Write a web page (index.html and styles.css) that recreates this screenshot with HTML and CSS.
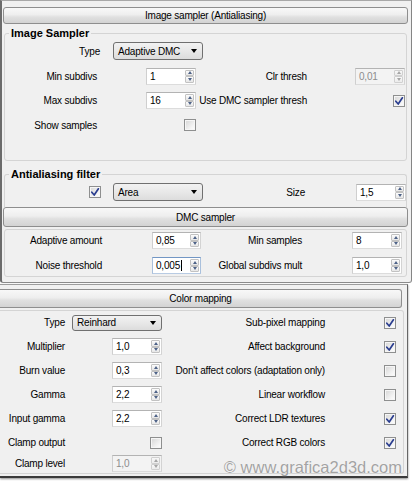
FILE: index.html
```html
<!DOCTYPE html>
<html>
<head>
<meta charset="utf-8">
<link rel="stylesheet" href="styles.css">
</head>
<body>
<div class="panel p1">
  <div class="hdr h1">Image sampler (Antialiasing)</div>

  <fieldset class="grp g1">
    <legend>Image Sampler</legend>
    <div class="rows r1">
      <div class="row row-type">
        <span class="lbl w95">Type</span>
        <div class="combo">Adaptive DMC<i class="caret"></i></div>
      </div>
      <div class="row grid c1">
        <span class="lbl">Min subdivs</span>
        <div class="spin"><span class="val">1</span><span class="arr"><b class="up"></b><b class="dn"></b></span></div>
        <span class="lbl">Clr thresh</span>
        <div class="spin dis"><span class="val">0,01</span><span class="arr"><b class="up"></b><b class="dn"></b></span></div>
      </div>
      <div class="row grid c1">
        <span class="lbl">Max subdivs</span>
        <div class="spin"><span class="val">16</span><span class="arr"><b class="up"></b><b class="dn"></b></span></div>
        <span class="lbl">Use DMC sampler thresh</span>
        <div class="chk on"><svg viewBox="0 0 10 10" width="10" height="10"><path d="M1.8 5.2 L4.2 8 L8.4 1.8" /></svg></div>
      </div>
      <div class="row grid c1">
        <span class="lbl">Show samples</span>
        <div class="chk"></div>
        <span></span>
        <span></span>
      </div>
    </div>
  </fieldset>

  <fieldset class="grp g2">
    <legend>Antialiasing filter</legend>
    <div class="row row-flt">
      <div class="chk on ml84"><svg viewBox="0 0 10 10" width="10" height="10"><path d="M1.8 5.2 L4.2 8 L8.4 1.8" /></svg></div>
      <div class="combo ml12">Area<i class="caret"></i></div>
      <span class="lbl grow">Size</span>
      <div class="spin ml51"><span class="val">1,5</span><span class="arr"><b class="up"></b><b class="dn"></b></span></div>
    </div>
  </fieldset>

  <div class="hdr h2">DMC sampler</div>

  <div class="box g3">
    <div class="rows r3">
      <div class="row grid c3">
        <span class="lbl">Adaptive amount</span>
        <div class="spin w49"><span class="val">0,85</span><span class="arr"><b class="up"></b><b class="dn"></b></span></div>
        <span class="lbl">Min samples</span>
        <div class="spin"><span class="val">8</span><span class="arr"><b class="up"></b><b class="dn"></b></span></div>
      </div>
      <div class="row grid c3">
        <span class="lbl">Noise threshold</span>
        <div class="spin w49 foc"><span class="val">0,005<i class="cur"></i></span><span class="arr"><b class="up"></b><b class="dn"></b></span></div>
        <span class="lbl">Global subdivs mult</span>
        <div class="spin"><span class="val">1,0</span><span class="arr"><b class="up"></b><b class="dn"></b></span></div>
      </div>
    </div>
  </div>
</div>

<div class="panel p2">
  <div class="hdr h3">Color mapping</div>
  <div class="box gcm">
    <div class="rows r4">
      <div class="row grid c4">
        <span class="lbl">Type</span>
        <div class="combo sm">Reinhard<i class="caret"></i></div>
        <span class="lbl">Sub-pixel mapping</span>
        <div class="chk on"><svg viewBox="0 0 10 10" width="10" height="10"><path d="M1.8 5.2 L4.2 8 L8.4 1.8" /></svg></div>
      </div>
      <div class="row grid c4">
        <span class="lbl">Multiplier</span>
        <div class="spin"><span class="val">1,0</span><span class="arr"><b class="up"></b><b class="dn"></b></span></div>
        <span class="lbl">Affect background</span>
        <div class="chk on"><svg viewBox="0 0 10 10" width="10" height="10"><path d="M1.8 5.2 L4.2 8 L8.4 1.8" /></svg></div>
      </div>
      <div class="row grid c4">
        <span class="lbl">Burn value</span>
        <div class="spin"><span class="val">0,3</span><span class="arr"><b class="up"></b><b class="dn"></b></span></div>
        <span class="lbl">Don't affect colors (adaptation only)</span>
        <div class="chk"></div>
      </div>
      <div class="row grid c4">
        <span class="lbl">Gamma</span>
        <div class="spin"><span class="val">2,2</span><span class="arr"><b class="up"></b><b class="dn"></b></span></div>
        <span class="lbl">Linear workflow</span>
        <div class="chk"></div>
      </div>
      <div class="row grid c4">
        <span class="lbl">Input gamma</span>
        <div class="spin"><span class="val">2,2</span><span class="arr"><b class="up"></b><b class="dn"></b></span></div>
        <span class="lbl">Correct LDR textures</span>
        <div class="chk on"><svg viewBox="0 0 10 10" width="10" height="10"><path d="M1.8 5.2 L4.2 8 L8.4 1.8" /></svg></div>
      </div>
      <div class="row grid c4">
        <span class="lbl">Clamp output</span>
        <div class="chk"></div>
        <span class="lbl">Correct RGB colors</span>
        <div class="chk on"><svg viewBox="0 0 10 10" width="10" height="10"><path d="M1.8 5.2 L4.2 8 L8.4 1.8" /></svg></div>
      </div>
      <div class="row grid c4 last">
        <span class="lbl">Clamp level</span>
        <div class="spin dis"><span class="val">1,0</span><span class="arr"><b class="up"></b><b class="dn"></b></span></div>
        <span></span>
        <span></span>
      </div>
    </div>
  </div>
  <div class="wm">© www.grafica2d3d.com</div>
</div>
</body>
</html>
```

FILE: styles.css
```css
* { box-sizing: border-box; }
html, body { margin: 0; padding: 0; }
body {
  width: 414px;
  height: 484px;
  overflow: hidden;
  background: #ffffff;
  font-family: "Liberation Sans", Arial, sans-serif;
  font-size: 10px;
  color: #000;
  letter-spacing: -0.2px;
}

.panel { background: #f0f0f0; }

.p1 {
  width: 412px;
  height: 283px;
  border-left: 2px solid #6b6b6b;
  border-right: 1px solid #858585;
  border-top: 1px solid #a8a8a8;
  border-bottom: 1px solid #8a8a8a;
  border-radius: 0 0 3px 3px;
  padding-top: 6px;
}

.p2 {
  position: relative;
  margin-top: 1px;
  width: 408px;
  height: 194px;
  border-top: 1px solid #9c9c9c;
  border-right: 1px solid #666;
  border-bottom: 2px solid #3a3a3a;
  box-shadow: 0 1px 2px rgba(0, 0, 0, 0.45);
  padding-top: 4px;
}

/* rollout header buttons */
.hdr {
  height: 17px;
  margin: 0 3px 0 1px;
  border: 1px solid #8e8e8e;
  border-radius: 3px;
  background: linear-gradient(#f8f8f8, #eeeeee 45%, #e0e0e0 60%, #d3d3d3);
  display: flex;
  align-items: center;
  justify-content: center;
  line-height: 13px;
}
.h2 { height: 20px; }
.h3 {
  height: 19px;
  margin: 0 5px 0 0;
  border-left: 0;
  border-radius: 0 3px 3px 0;
}

/* group boxes */
.grp {
  margin: 3px 4px 0 2px;
  padding: 2px 0 26.5px 0;
  border: 1px solid #d4d4d4;
  border-radius: 3px;
  min-width: 0;
}
.grp legend {
  padding: 0 2px;
  margin-left: 4px;
  font-weight: bold;
  font-size: 11px;
  line-height: 13px;
  letter-spacing: 0;
}
.g2 {
  margin-top: 7px;
  padding-bottom: 6px;
  border-bottom: 0;
  border-radius: 3px 3px 0 0;
}
.box {
  border: 1px solid #d4d4d4;
  border-radius: 3px;
}
.g3 {
  margin: 2px 4px 0 2px;
  padding: 2px 0;
}
.gcm {
  margin: 2px 3px 0 0;
  padding: 3px 0 1px 0;
  border-left: 0;
  border-radius: 0 3px 3px 0;
}

/* rows */
.rows { display: flex; flex-direction: column; }
.r1 { gap: 7.5px; }
.r3 { gap: 8px; }
.r4 { gap: 7px; }
.last { margin-top: -3px; }

.row {
  height: 17px;
  display: flex;
  align-items: center;
}
.row-type, .row-flt { height: 18px; }

.grid { display: grid; align-items: center; }
.c1 { grid-template-columns: 92px 99px 111px 98px; }
.c3 { grid-template-columns: 97px 99px 101px 100px; }
.c4 { grid-template-columns: 65px 97px 163px 71px; }
.grid > .spin, .grid > .chk, .grid > .combo { justify-self: end; }

.lbl {
  text-align: right;
  line-height: 13px;
  white-space: nowrap;
}
.w95 { width: 95px; flex: none; }
.row-type .combo { margin-left: 13px; }
.grow { flex: 1; }
.ml84 { margin-left: 84px; }
.ml12 { margin-left: 12px; }
.ml51 { margin-left: 51px; }

/* combo box */
.combo {
  width: 90px;
  height: 18px;
  flex: none;
  border: 1px solid #707070;
  border-radius: 3px;
  background: linear-gradient(#f2f2f2, #e8e8e8 50%, #dcdcdc);
  display: flex;
  align-items: center;
  padding: 0 5px 0 4px;
  line-height: 13px;
}
.combo.sm { height: 16px; }
.caret {
  margin-left: auto;
  width: 0;
  height: 0;
  border-left: 3.5px solid transparent;
  border-right: 3.5px solid transparent;
  border-top: 4px solid #000;
}

/* spinner */
.spin {
  width: 50px;
  height: 17px;
  flex: none;
  border: 1px solid;
  border-color: #b3b3b3 #d3d3d3 #dcdcdc #cfcfcf;
  background: #fff;
  display: flex;
  align-items: stretch;
  padding: 1px;
}
.w49 { width: 49px; }
.val {
  flex: 1;
  padding-left: 2px;
  line-height: 13px;
  display: flex;
  align-items: center;
}
.arr {
  width: 9px;
  display: flex;
  flex-direction: column;
}
.arr b {
  flex: 1;
  border: 1px solid #c2c2c2;
  border-radius: 1px;
  background: linear-gradient(#fcfcfc, #e6e6e6);
  display: flex;
  align-items: center;
  justify-content: center;
}
.arr b::after {
  content: "";
  width: 0;
  height: 0;
  border-left: 2.5px solid transparent;
  border-right: 2.5px solid transparent;
}
.arr .up::after { border-bottom: 3px solid #4e6287; }
.arr .dn::after { border-top: 3px solid #4e6287; }

.spin.dis { background: #f3f3f3; color: #8d8d8d; }
.spin.dis .arr b { background: linear-gradient(#f8f8f8, #ececec); border-color: #d0d0d0; }
.spin.dis .arr .up::after { border-bottom-color: #a6a6a6; }
.spin.dis .arr .dn::after { border-top-color: #a6a6a6; }

.spin.foc { border-color: #7296c4 #a9c0dc #b8cbe3 #a9c0dc; }
.cur {
  width: 1px;
  height: 11px;
  background: #000;
  margin-left: 1px;
}

/* checkbox */
.chk {
  width: 12px;
  height: 12px;
  flex: none;
  border: 1px solid #8e8f8f;
  background: linear-gradient(135deg, #d5d5d5, #f2f2f2 65%, #ffffff);
  box-shadow: inset 0 0 0 1px #f6f6f6;
  display: flex;
  align-items: center;
  justify-content: center;
}
.chk svg { display: block; }
.chk path {
  fill: none;
  stroke: #2a3d8f;
  stroke-width: 1.7;
  stroke-linecap: round;
  stroke-linejoin: round;
}

/* watermark overlay */
.wm {
  position: absolute;
  right: 5px;
  top: 174px;
  font-size: 16.5px;
  line-height: 16.5px;
  color: #a3a3a3;
  letter-spacing: 0;
  text-shadow: 0 0 1px #ffffff;
  white-space: nowrap;
}
```
